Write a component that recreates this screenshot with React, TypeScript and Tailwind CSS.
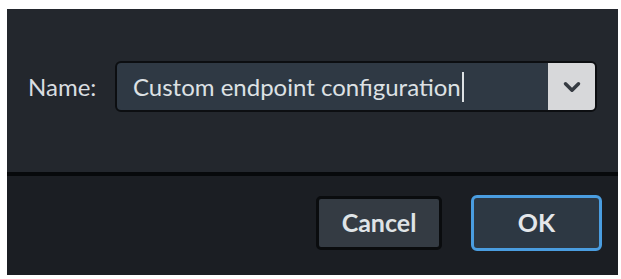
import { ChevronDown } from "lucide-react"

export default function App() {
  return (
    <div
      className="w-[621px] h-[279px] bg-white pt-[9px] pl-[7px] pr-[3px] pb-[4px]"
      style={{ fontFamily: "Lato, 'Noto Sans', sans-serif" }}
    >
      <div className="flex h-full flex-col bg-[#1b1e23]">
        {/* Name row */}
        <div className="h-[163px] bg-[#23272d] pt-[52px] pl-[21px] pr-[21px]">
          <div className="flex items-center">
            <span className="w-[87px] text-[24px] text-[#d9dde0]">Name:</span>
            <div className="flex h-[51px] flex-1 rounded-[6px] border-2 border-[#0c0e11] bg-[#0c0e11]">
              <div className="flex flex-1 items-center rounded-l-[4px] bg-[#2f3944] pl-[16px]">
                <span className="text-[24px] text-[#dde1e4]">Custom endpoint configuration</span>
                <span className="ml-[1px] h-[30px] w-[2px] bg-[#dde1e4]" />
              </div>
              <div className="flex w-[47px] items-center justify-center rounded-r-[4px] bg-[#d7d8da]">
                <ChevronDown size={26} strokeWidth={3.2} className="text-[#363b42]" />
              </div>
            </div>
          </div>
        </div>

        <div className="h-[4px] bg-[#07090b]" />

        {/* Buttons */}
        <div className="flex flex-1 items-center justify-end gap-[29px] pr-[16px] pb-[6px]">
          <button className="h-[54px] w-[126px] rounded-[5px] border-[3px] border-[#0a0c0e] bg-[#343b43] text-[25px] font-bold text-[#dfe3e6]">
            Cancel
          </button>
          <button className="h-[56px] w-[131px] rounded-[6px] border-[3px] border-[#4a9de0] bg-[#2d3843] text-[25px] font-bold text-[#e4e7ea]">
            OK
          </button>
        </div>
      </div>
    </div>
  )
}
